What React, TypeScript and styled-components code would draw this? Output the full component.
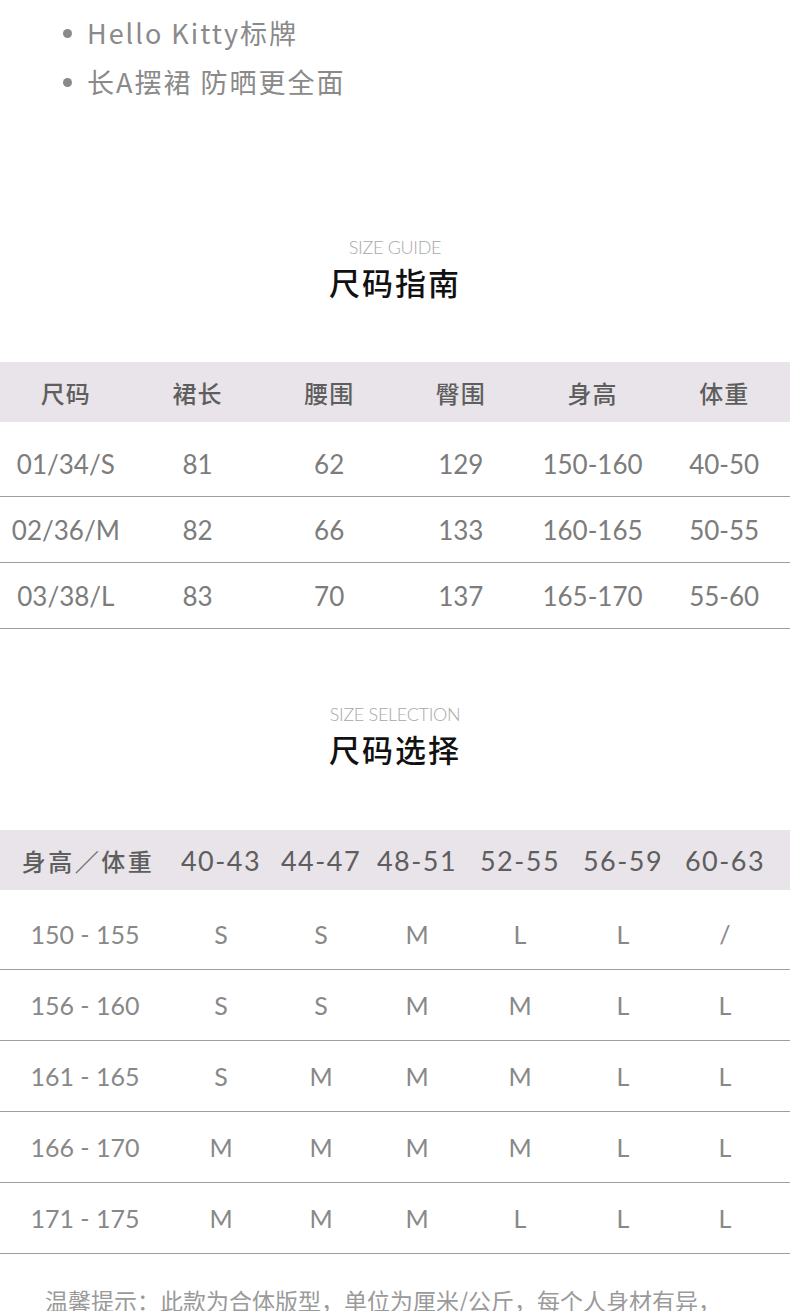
import React from 'react';
import styled, { createGlobalStyle } from 'styled-components';

const GlobalStyle = createGlobalStyle`
  html, body {
    margin: 0;
    padding: 0;
    background: #fff;
  }
  body {
    font-family: "Noto Sans CJK SC", "Noto Sans", sans-serif;
  }
`;

const CJK = '"Noto Sans CJK SC", "Noto Sans", sans-serif';
const NUM = 'Lato, "Noto Sans CJK SC", sans-serif';

const Page = styled.div`
  width: 790px;
  overflow: hidden;
`;

const BulletList = styled.ul`
  list-style: none;
  margin: 0;
  padding: 8px 0 0 67px;
`;

const BulletItem = styled.li`
  position: relative;
  padding-left: 20px;
  font-family: ${CJK};
  font-size: 27px;
  line-height: 49px;
  letter-spacing: 2px;
  color: #8a8a8a;

  &::before {
    content: '';
    position: absolute;
    left: -4px;
    top: 21px;
    width: 9px;
    height: 9px;
    border-radius: 50%;
    background: #8a8a8a;
  }
`;

const SectionHead = styled.div<{ $top: number; $bottom: number }>`
  margin-top: ${(p) => p.$top}px;
  margin-bottom: ${(p) => p.$bottom}px;
  text-align: center;
`;

const EnTitle = styled.div`
  font-family: Lato, "Liberation Sans", sans-serif;
  font-weight: 300;
  font-size: 18px;
  line-height: 20px;
  letter-spacing: -0.3px;
  color: #a8a8a8;
`;

const CnTitle = styled.div`
  margin-top: 5px;
  font-family: ${CJK};
  font-weight: 500;
  font-size: 31px;
  line-height: 40px;
  letter-spacing: 2px;
  color: #111;
`;

const Grid = styled.div<{ $cols: string }>`
  display: grid;
  grid-template-columns: ${(p) => p.$cols};
  align-items: center;
`;

const HeadRow = styled(Grid)`
  height: 60px;
  background: #e8e4e9;
  margin-bottom: 9px;
`;

const Row = styled(Grid)<{ $h: number }>`
  box-sizing: border-box;
  height: ${(p) => p.$h}px;
  border-bottom: 1px solid #9e9e9e;
`;

const HeadCell = styled.div<{ $num?: boolean; $wide?: boolean }>`
  text-align: center;
  padding-left: ${(p) => (p.$wide ? 6 : 0)}px;
  font-family: ${(p) => (p.$num ? NUM : CJK)};
  font-weight: ${(p) => (p.$num ? 400 : 500)};
  font-size: ${(p) => (p.$num ? 27 : 24)}px;
  letter-spacing: ${(p) => (p.$num ? 1.5 : p.$wide ? 2.5 : 1)}px;
  color: #5e5e5e;
  white-space: nowrap;
`;

const Cell = styled.div<{ $size: number; $color: string }>`
  text-align: center;
  font-family: ${NUM};
  font-size: ${(p) => p.$size}px;
  color: ${(p) => p.$color};
  white-space: nowrap;
`;

const Footer = styled.div`
  margin-top: 31px;
  padding-left: 45px;
  font-family: ${CJK};
  font-size: 23px;
  line-height: 30px;
  color: #9a9a9a;
  white-space: nowrap;
`;

const guideCols = 'repeat(6, 1fr)';
const guideHead = ['尺码', '裙长', '腰围', '臀围', '身高', '体重'];
const guideRows = [
  ['01/34/S', '81', '62', '129', '150-160', '40-50'],
  ['02/36/M', '82', '66', '133', '160-165', '50-55'],
  ['03/38/L', '83', '70', '137', '165-170', '55-60'],
];

const selCols = '170px 102px 98px 94px 112px 94px 110px 10px';
const selHead = ['40-43', '44-47', '48-51', '52-55', '56-59', '60-63'];
const selRows = [
  ['150 - 155', 'S', 'S', 'M', 'L', 'L', '/'],
  ['156 - 160', 'S', 'S', 'M', 'M', 'L', 'L'],
  ['161 - 165', 'S', 'M', 'M', 'M', 'L', 'L'],
  ['166 - 170', 'M', 'M', 'M', 'M', 'L', 'L'],
  ['171 - 175', 'M', 'M', 'M', 'L', 'L', 'L'],
];

const App = () => {
  return (
    <Page>
      <GlobalStyle />
      <BulletList>
        <BulletItem>Hello Kitty标牌</BulletItem>
        <BulletItem>长A摆裙 防晒更全面</BulletItem>
      </BulletList>

      <SectionHead $top={131} $bottom={60}>
        <EnTitle>SIZE GUIDE</EnTitle>
        <CnTitle>尺码指南</CnTitle>
      </SectionHead>

      <HeadRow $cols={guideCols}>
        {guideHead.map((h) => (
          <HeadCell key={h}>{h}</HeadCell>
        ))}
      </HeadRow>
      {guideRows.map((r) => (
        <Row key={r[0]} $cols={guideCols} $h={66}>
          {r.map((c, i) => (
            <Cell key={i} $size={26} $color="#7c7c7c">{c}</Cell>
          ))}
        </Row>
      ))}

      <SectionHead $top={75} $bottom={61}>
        <EnTitle>SIZE SELECTION</EnTitle>
        <CnTitle>尺码选择</CnTitle>
      </SectionHead>

      <HeadRow $cols={selCols}>
        <HeadCell $wide>身高／体重</HeadCell>
        {selHead.map((h) => (
          <HeadCell key={h} $num>{h}</HeadCell>
        ))}
      </HeadRow>
      {selRows.map((r) => (
        <Row key={r[0]} $cols={selCols} $h={71}>
          {r.map((c, i) => (
            <Cell key={i} $size={25} $color="#888">{c}</Cell>
          ))}
        </Row>
      ))}

      <Footer>温馨提示：此款为合体版型，单位为厘米/公斤，每个人身材有异，</Footer>
    </Page>
  );
};

export default App;
